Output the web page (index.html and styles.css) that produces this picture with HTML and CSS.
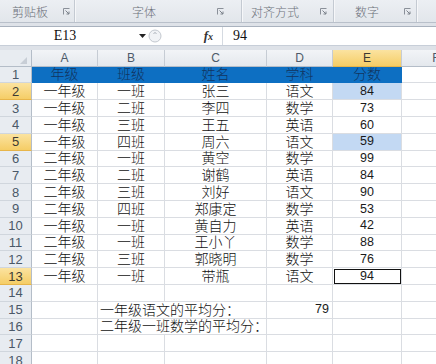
FILE: index.html
```html
<!DOCTYPE html>
<html lang="zh">
<head>
<meta charset="utf-8">
<link rel="stylesheet" href="styles.css">
</head>
<body>
<div class="ribbon">
  <div class="grp g1"><span>剪贴板</span><svg class="launch" viewBox="0 0 7 7"><path d="M0.5 6.5V0.5H6.5" fill="none" stroke="#8a9099"/><path d="M2.5 2.5L6 6M6 3.5V6H3.5" fill="none" stroke="#7b818a"/></svg></div>
  <div class="grp g2"><span>字体</span><svg class="launch" viewBox="0 0 7 7"><path d="M0.5 6.5V0.5H6.5" fill="none" stroke="#8a9099"/><path d="M2.5 2.5L6 6M6 3.5V6H3.5" fill="none" stroke="#7b818a"/></svg></div>
  <div class="grp g3"><span>对齐方式</span><svg class="launch" viewBox="0 0 7 7"><path d="M0.5 6.5V0.5H6.5" fill="none" stroke="#8a9099"/><path d="M2.5 2.5L6 6M6 3.5V6H3.5" fill="none" stroke="#7b818a"/></svg></div>
  <div class="grp g4"><span>数字</span><svg class="launch" viewBox="0 0 7 7"><path d="M0.5 6.5V0.5H6.5" fill="none" stroke="#8a9099"/><path d="M2.5 2.5L6 6M6 3.5V6H3.5" fill="none" stroke="#7b818a"/></svg></div>
  <div class="grp g5"></div>
</div>

<div class="fbar">
  <div class="namebox"><span class="ref">E13</span><svg class="drop" viewBox="0 0 7 4"><path d="M0 0H7L3.5 4Z" fill="#222"/></svg></div>
  <div class="split"><svg viewBox="0 0 14 16" class="knob"><circle cx="7" cy="8" r="6" fill="#f1f3f6" stroke="#c3c8cf"/><path d="M5.5 5.5a2 2 0 0 1 3 0" fill="none" stroke="#aab0b8"/></svg></div>
  <div class="fx">f<span class="x">x</span></div>
  <div class="formula">94</div>
</div>

<div class="sheet">
  <div class="corner"><span class="tri"></span></div>
  <div class="ch">A</div><div class="ch">B</div><div class="ch">C</div><div class="ch">D</div><div class="ch sel">E</div><div class="ch">F</div>

  <div class="rh">1</div><div class="c hd">年级</div><div class="c hd">班级</div><div class="c hd">姓名</div><div class="c hd">学科</div><div class="c hd">分数</div><div class="c"></div>
  <div class="rh sel">2</div><div class="c">一年级</div><div class="c">一班</div><div class="c">张三</div><div class="c">语文</div><div class="c n s">84</div><div class="c"></div>
  <div class="rh">3</div><div class="c">一年级</div><div class="c">二班</div><div class="c">李四</div><div class="c">数学</div><div class="c n">73</div><div class="c"></div>
  <div class="rh">4</div><div class="c">一年级</div><div class="c">三班</div><div class="c">王五</div><div class="c">英语</div><div class="c n">60</div><div class="c"></div>
  <div class="rh sel">5</div><div class="c">一年级</div><div class="c">四班</div><div class="c">周六</div><div class="c">语文</div><div class="c n s">59</div><div class="c"></div>
  <div class="rh">6</div><div class="c">二年级</div><div class="c">一班</div><div class="c">黄空</div><div class="c">数学</div><div class="c n">99</div><div class="c"></div>
  <div class="rh">7</div><div class="c">二年级</div><div class="c">二班</div><div class="c">谢鹤</div><div class="c">英语</div><div class="c n">84</div><div class="c"></div>
  <div class="rh">8</div><div class="c">二年级</div><div class="c">三班</div><div class="c">刘好</div><div class="c">语文</div><div class="c n">90</div><div class="c"></div>
  <div class="rh">9</div><div class="c">二年级</div><div class="c">四班</div><div class="c">郑康定</div><div class="c">数学</div><div class="c n">53</div><div class="c"></div>
  <div class="rh">10</div><div class="c">一年级</div><div class="c">一班</div><div class="c">黄自力</div><div class="c">英语</div><div class="c n">42</div><div class="c"></div>
  <div class="rh">11</div><div class="c">二年级</div><div class="c">一班</div><div class="c">王小丫</div><div class="c">数学</div><div class="c n">88</div><div class="c"></div>
  <div class="rh">12</div><div class="c">二年级</div><div class="c">三班</div><div class="c">郭晓明</div><div class="c">数学</div><div class="c n">76</div><div class="c"></div>
  <div class="rh sel">13</div><div class="c">一年级</div><div class="c">一班</div><div class="c">带瓶</div><div class="c">语文</div><div class="c n act">94</div><div class="c"></div>
  <div class="rh">14</div><div class="c"></div><div class="c"></div><div class="c"></div><div class="c"></div><div class="c"></div><div class="c"></div>
  <div class="rh">15</div><div class="c"></div><div class="c wide">一年级语文的平均分：</div><div class="c n right">79</div><div class="c"></div><div class="c"></div>
  <div class="rh">16</div><div class="c"></div><div class="c wide">二年级一班数学的平均分：</div><div class="c"></div><div class="c"></div><div class="c"></div>
  <div class="rh">17</div><div class="c"></div><div class="c"></div><div class="c"></div><div class="c"></div><div class="c"></div><div class="c"></div>
  <div class="rh">18</div><div class="c"></div><div class="c"></div><div class="c"></div><div class="c"></div><div class="c"></div><div class="c"></div>
</div>
</body>
</html>
```

FILE: styles.css
```css
* { box-sizing: border-box; margin: 0; padding: 0; }

body {
  width: 436px;
  height: 364px;
  overflow: hidden;
  background: #dee2e8;
  font-family: "Liberation Sans", "Noto Sans CJK SC", sans-serif;
}

/* ribbon group labels */
.ribbon {
  display: flex;
  height: 23px;
  background: linear-gradient(#eceff3, #e2e6eb);
  border-bottom: 1px solid #b9c0ca;
}
.grp {
  display: flex;
  align-items: center;
  height: 22px;
  border-right: 1px solid #c4cad2;
  box-shadow: 1px 0 0 #f6f7f9;
  font-family: "Noto Sans CJK SC", sans-serif;
  font-weight: 300;
  font-size: 12px;
  color: #6b7079;
}
.launch { width: 7px; height: 7px; margin-left: auto; }
.g1 { width: 75px; padding-left: 12px; padding-right: 4px; }
.g2 { width: 167px; padding-left: 57px; padding-right: 17px; }
.g3 { width: 92px; padding-left: 9px; padding-right: 6px; }
.g4 { width: 83px; padding-left: 21px; padding-right: 5px; }
.g5 { flex: 1; border-right: none; box-shadow: none; }

/* formula bar */
.fbar {
  display: flex;
  height: 20px;
  margin-top: 3px;
  background: #fff;
  border-top: 1px solid #a9b2be;
  border-bottom: 1px solid #c7ced8;
}
.namebox {
  width: 148px;
  display: flex;
  align-items: center;
}
.ref {
  width: 130px;
  text-align: center;
  font-family: "Liberation Serif", "DejaVu Serif", serif;
  font-size: 14px;
  color: #111;
}
.drop { width: 7px; height: 4px; margin-left: 9px; }
.split { width: 18px; display: flex; align-items: center; }
.knob { width: 14px; height: 16px; }
.fx {
  width: 56px;
  text-align: right;
  padding-right: 9px;
  font-family: "Liberation Serif", serif;
  font-style: italic;
  font-weight: bold;
  font-size: 13px;
  line-height: 18px;
  color: #333;
}
.fx .x { font-size: 10px; }
.formula {
  flex: 1;
  border-left: 1px solid #d5dae1;
  padding-left: 10px;
  font-family: "Liberation Serif", serif;
  font-size: 14px;
  line-height: 18px;
  color: #111;
}

/* sheet */
.sheet {
  margin-top: 4px;
  display: grid;
  grid-template-columns: 32px 66px 67px 102px 66px 69px 69px;
  grid-template-rows: 16.6px;
  grid-auto-rows: 16.8px;
  background: #fff;
}
.corner {
  background: #e8ecf1;
  border-right: 1px solid #b4bdc8;
  border-bottom: 1px solid #b4bdc8;
  position: relative;
}
.tri {
  position: absolute;
  right: 4px;
  bottom: 2px;
  width: 0;
  height: 0;
  border-left: 7px solid transparent;
  border-bottom: 7px solid #c8ced6;
}
.ch {
  display: flex;
  align-items: center;
  justify-content: center;
  background: linear-gradient(#f2f4f7, #e4e8ed);
  border-right: 1px solid #c6ccd4;
  border-bottom: 1px solid #b4bdc8;
  font-size: 12px;
  color: #4d5a69;
}
.rh {
  display: flex;
  align-items: center;
  justify-content: center;
  background: #e8ecf1;
  border-right: 1px solid #b4bdc8;
  border-bottom: 1px solid #d0d6dd;
  font-size: 13px;
  color: #4a5868;
}
.ch.sel, .rh.sel {
  background: linear-gradient(#fbe3a0, #f5cd66);
  border-bottom-color: #e7b54a;
  color: #3c3a33;
}
.c {
  display: flex;
  align-items: center;
  justify-content: center;
  border-right: 1px solid #dadde2;
  border-bottom: 1px solid #dadde2;
  font-size: 14px;
  font-weight: 300;
  line-height: 1;
  color: #111;
  white-space: nowrap;
}
.c.hd {
  background: #0d6fc2;
  border-color: #0d6fc2;
  color: #12345f;
}
.c.n { font-size: 12.5px; font-weight: 400; color: #1a1a1a; }
.c.s { background: #c3d9f3; }
.c.act { outline: 1px solid #111; outline-offset: -2px; }
.c.wide {
  grid-column: span 2;
  justify-content: flex-start;
  padding-left: 2px;
}
.c.right { justify-content: flex-end; padding-right: 3px; }
```
